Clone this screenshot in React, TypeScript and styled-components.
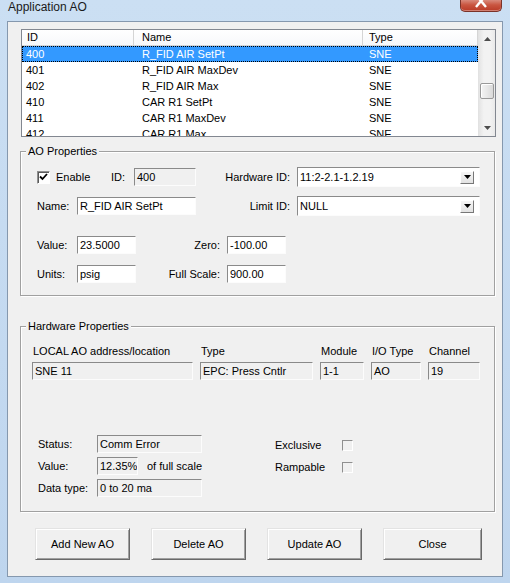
import styled, { createGlobalStyle } from "styled-components";

const GlobalStyle = createGlobalStyle`
  html, body {
    margin: 0;
    padding: 0;
    background: #c4d9f0;
  }
  body {
    font-family: "Liberation Sans", Arial, sans-serif;
    font-size: 11px;
    line-height: 13px;
    color: #000;
  }
  * {
    box-sizing: border-box;
  }
`;

const Window = styled.div`
  width: 510px;
  height: 583px;
  display: flex;
  flex-direction: column;
  background: linear-gradient(180deg, #cbdff3 0%, #bed5ee 100%);
  overflow: hidden;
`;

const TitleBar = styled.div`
  height: 21px;
  flex: none;
  display: flex;
  align-items: flex-start;
  padding-left: 8px;
`;

const Title = styled.span`
  font-size: 12px;
  line-height: 12px;
  margin-top: 1px;
  color: #1a1a1a;
`;

const CloseButton = styled.div`
  margin-left: auto;
  margin-right: 8px;
  width: 42px;
  height: 12px;
  border: 1px solid #7b3329;
  border-top: none;
  border-radius: 0 0 5px 5px;
  background: linear-gradient(180deg, #d98a7c 0%, #c95540 45%, #b93a27 100%);
  box-shadow: inset 0 -1px 0 rgba(255, 255, 255, 0.35);
  display: flex;
  justify-content: center;
  align-items: flex-start;
  overflow: hidden;
`;

const Client = styled.div`
  margin: 0 7px;
  height: 556px;
  flex: none;
  border: 1px solid #8598ae;
  background: #f0f0f0;
  display: flex;
  flex-direction: column;
  align-items: flex-start;
  padding: 7px 0 0 12px;
`;

/* ---------- list view ---------- */

const ListView = styled.div`
  margin-left: 1px;
  width: 475px;
  height: 108px;
  flex: none;
  border: 1px solid #828790;
  background: #fff;
  display: flex;
  overflow: hidden;
`;

const ListBody = styled.div`
  flex: 1;
  display: flex;
  flex-direction: column;
  overflow: hidden;
`;

const Columns = styled.div`
  display: grid;
  grid-template-columns: 112px 229px 1fr;
  height: 16px;
  flex: none;
  align-items: center;
  white-space: nowrap;

  & > *:nth-child(1) {
    padding-left: 4px;
  }
  & > *:nth-child(2) {
    padding-left: 8px;
  }
  & > *:nth-child(3) {
    padding-left: 6px;
  }
`;

const HeaderRow = styled(Columns)`
  background: linear-gradient(180deg, #ffffff 0%, #f7f8fa 100%);
  border-bottom: 1px solid #d5d5d5;
  & > *:nth-child(1) {
    padding-left: 5px;
  }
`;

const HeaderCell = styled.div`
  height: 100%;
  line-height: 15px;
  border-right: 1px solid #d5d5d5;
`;

const ListRow = styled(Columns)<{ $selected?: boolean }>`
  background: ${(p) => (p.$selected ? "#3399ff" : "transparent")};
  color: ${(p) => (p.$selected ? "#fff" : "#000")};
  outline: ${(p) => (p.$selected ? "1px dotted #000" : "none")};
  outline-offset: -1px;
`;

const Cell = styled.div`
  line-height: 16px;
`;

const ScrollBar = styled.div`
  width: 17px;
  flex: none;
  display: flex;
  flex-direction: column;
  border-left: 1px solid #e2e2e2;
  background: linear-gradient(90deg, #e4e4e4 0%, #f2f2f2 30%, #f2f2f2 70%, #e9e9e9 100%);
`;

const ScrollArrow = styled.div`
  height: 17px;
  flex: none;
  display: flex;
  align-items: center;
  justify-content: center;
`;

const ScrollTrack = styled.div`
  flex: 1;
  padding: 36px 1px 0 1px;
`;

const Thumb = styled.div`
  height: 16px;
  border: 1px solid #999;
  border-radius: 2px;
  background: linear-gradient(90deg, #f4f4f4 0%, #e8e8e8 50%, #d9d9d9 100%);
  box-shadow: inset 1px 1px 0 #fff;
`;

/* ---------- group boxes ---------- */

const Group = styled.fieldset<{ $mt: number }>`
  margin: ${(p) => p.$mt}px 0 0 0;
  padding: 0;
  width: 475px;
  flex: none;
  min-inline-size: 0;
  border: 1px solid #a0a0a0;
  box-shadow: inset 1px 1px 0 #fff, 1px 1px 0 #fff;
`;

const Legend = styled.legend`
  margin-left: 5px;
  padding: 0 2px;
  line-height: 13px;
  background: #f0f0f0;
`;

const GroupBody = styled.div<{ $pad: string }>`
  padding: ${(p) => p.$pad};
  display: flex;
  flex-direction: column;
`;

const Row = styled.div<{ $mt?: number }>`
  display: flex;
  align-items: center;
  height: 20px;
  margin-top: ${(p) => p.$mt ?? 0}px;
`;

const Label = styled.span<{ $w?: number; $right?: boolean }>`
  flex: none;
  width: ${(p) => (p.$w ? `${p.$w}px` : "auto")};
  text-align: ${(p) => (p.$right ? "right" : "left")};
  padding-right: ${(p) => (p.$right ? 7 : 0)}px;
  white-space: nowrap;
`;

const Field = styled.div<{ $w?: number; $h?: number; $ro?: boolean }>`
  flex: none;
  width: ${(p) => (p.$w ? `${p.$w}px` : "100%")};
  height: ${(p) => p.$h ?? 18}px;
  line-height: ${(p) => (p.$h ?? 18) - 2}px;
  padding-left: 2px;
  border: 1px solid;
  border-color: #8a8a8a #fcfcfc #fcfcfc #8a8a8a;
  background: ${(p) => (p.$ro ? "#f0f0f0" : "#fff")};
  white-space: nowrap;
  overflow: hidden;
`;

const Combo = styled.div`
  flex: none;
  width: 183px;
  height: 20px;
  display: flex;
  align-items: center;
  padding-left: 2px;
  border: 1px solid;
  border-color: #8a8a8a #fcfcfc #fcfcfc #8a8a8a;
  background: #fff;
`;

const ComboText = styled.span`
  flex: 1;
  white-space: nowrap;
`;

const ComboButton = styled.div`
  width: 14px;
  height: 13px;
  margin-right: 5px;
  border: 1px solid;
  border-color: #fff #777 #777 #fff;
  background: linear-gradient(180deg, #f6f6f6 0%, #e2e2e2 100%);
  display: flex;
  align-items: center;
  justify-content: center;
`;

const CheckLabel = styled.label`
  flex: none;
  width: 74px;
  display: flex;
  align-items: center;
  gap: 6px;
`;

const CheckBox = styled.span<{ $size: number; $flat?: boolean }>`
  flex: none;
  width: ${(p) => p.$size}px;
  height: ${(p) => p.$size}px;
  border: 1px solid;
  border-color: #8f8f8f #fff #fff #8f8f8f;
  background: ${(p) => (p.$flat ? "#f0f0f0" : "#fff")};
  box-shadow: ${(p) => (p.$flat ? "none" : "inset 1px 1px 0 #5a5a5a")};
  display: flex;
  align-items: center;
  justify-content: center;
`;

/* ---------- hardware properties ---------- */

const HwGrid = styled.div`
  display: grid;
  grid-template-columns: 161px 113px 44px 50px 52px;
  column-gap: 7px;
  row-gap: 4px;
`;

const ColHead = styled.div`
  padding-left: 1px;
  white-space: nowrap;
`;

const StatusArea = styled.div`
  display: flex;
  align-items: flex-start;
  margin-top: 55px;
  padding-left: 6px;
`;

const StatusGrid = styled.div`
  width: 159px;
  display: grid;
  grid-template-columns: 59px 1fr;
  grid-auto-rows: 18px;
  row-gap: 4px;
  align-items: center;
`;

const Inline = styled.div`
  display: flex;
  align-items: center;
  gap: 9px;
  white-space: nowrap;
`;

const Flags = styled.div`
  margin-left: 78px;
  padding-top: 4px;
  display: flex;
  flex-direction: column;
  gap: 10px;
`;

const FlagRow = styled.div`
  display: flex;
  align-items: center;
  height: 12px;
`;

/* ---------- buttons ---------- */

const ButtonRow = styled.div`
  display: flex;
  gap: 21px;
  margin-top: 16px;
  padding-left: 15px;
`;

const Button = styled.button<{ $w?: number }>`
  width: ${(p) => p.$w ?? 95}px;
  height: 32px;
  padding: 0;
  font: inherit;
  color: #000;
  background: #f0f0f0;
  border: 1px solid;
  border-color: #e3e3e3 #696969 #696969 #e3e3e3;
  box-shadow: inset 1px 1px 0 #fff, inset -1px -1px 0 #a0a0a0;
`;

const rows = [
  { id: "400", name: "R_FID AIR SetPt", type: "SNE" },
  { id: "401", name: "R_FID AIR MaxDev", type: "SNE" },
  { id: "402", name: "R_FID AIR Max", type: "SNE" },
  { id: "410", name: "CAR R1 SetPt", type: "SNE" },
  { id: "411", name: "CAR R1 MaxDev", type: "SNE" },
  { id: "412", name: "CAR R1 Max", type: "SNE" },
];

const DownTri = () => (
  <svg width="7" height="4" viewBox="0 0 7 4">
    <polygon points="0,0 7,0 3.5,4" fill="#000" />
  </svg>
);

const ScrollTri = ({ up }: { up?: boolean }) => (
  <svg width="7" height="4" viewBox="0 0 7 4">
    <polygon points={up ? "0,4 7,4 3.5,0" : "0,0 7,0 3.5,4"} fill="#4d4d4d" />
  </svg>
);

const App = () => {
  return (
    <>
      <GlobalStyle />
      <Window>
        <TitleBar>
          <Title>Application AO</Title>
          <CloseButton>
            <svg width="14" height="8" viewBox="0 0 14 8">
              <path d="M2 -5 L12 7 M12 -5 L2 7" stroke="#fff" strokeWidth="2.4" />
            </svg>
          </CloseButton>
        </TitleBar>
        <Client>
          <ListView>
            <ListBody>
              <HeaderRow>
                <HeaderCell>ID</HeaderCell>
                <HeaderCell>Name</HeaderCell>
                <HeaderCell>Type</HeaderCell>
              </HeaderRow>
              {rows.map((r, i) => (
                <ListRow key={r.id} $selected={i === 0}>
                  <Cell>{r.id}</Cell>
                  <Cell>{r.name}</Cell>
                  <Cell>{r.type}</Cell>
                </ListRow>
              ))}
            </ListBody>
            <ScrollBar>
              <ScrollArrow>
                <ScrollTri up />
              </ScrollArrow>
              <ScrollTrack>
                <Thumb />
              </ScrollTrack>
              <ScrollArrow>
                <ScrollTri />
              </ScrollArrow>
            </ScrollBar>
          </ListView>

          <Group $mt={8}>
            <Legend>AO Properties</Legend>
            <GroupBody $pad="9px 0 11px 16px">
              <Row>
                <CheckLabel>
                  <CheckBox $size={13}>
                    <svg width="9" height="8" viewBox="0 0 9 8">
                      <path d="M1 3.5 L3.5 6 L8 1" stroke="#000" strokeWidth="1.8" fill="none" />
                    </svg>
                  </CheckBox>
                  Enable
                </CheckLabel>
                <Label $w={23}>ID:</Label>
                <Field $w={62} $ro>
                  400
                </Field>
                <Label $w={101} $right>
                  Hardware ID:
                </Label>
                <Combo>
                  <ComboText>11:2-2.1-1.2.19</ComboText>
                  <ComboButton>
                    <DownTri />
                  </ComboButton>
                </Combo>
              </Row>
              <Row $mt={9}>
                <Label $w={40}>Name:</Label>
                <Field $w={119}>R_FID AIR SetPt</Field>
                <Label $w={101} $right>
                  Limit ID:
                </Label>
                <Combo>
                  <ComboText>NULL</ComboText>
                  <ComboButton>
                    <DownTri />
                  </ComboButton>
                </Combo>
              </Row>
              <Row $mt={19}>
                <Label $w={40}>Value:</Label>
                <Field $w={59}>23.5000</Field>
                <Label $w={91} $right>
                  Zero:
                </Label>
                <Field $w={59}>-100.00</Field>
              </Row>
              <Row $mt={9}>
                <Label $w={40}>Units:</Label>
                <Field $w={59}>psig</Field>
                <Label $w={91} $right>
                  Full Scale:
                </Label>
                <Field $w={59}>900.00</Field>
              </Row>
            </GroupBody>
          </Group>

          <Group $mt={24}>
            <Legend>Hardware Properties</Legend>
            <GroupBody $pad="12px 0 14px 11px">
              <HwGrid>
                <ColHead>LOCAL AO address/location</ColHead>
                <ColHead>Type</ColHead>
                <ColHead>Module</ColHead>
                <ColHead>I/O Type</ColHead>
                <ColHead>Channel</ColHead>
                <Field $ro>SNE 11</Field>
                <Field $ro>EPC: Press Cntlr</Field>
                <Field $ro>1-1</Field>
                <Field $ro>AO</Field>
                <Field $ro>19</Field>
              </HwGrid>
              <StatusArea>
                <StatusGrid>
                  <span>Status:</span>
                  <Field $ro>Comm Error</Field>
                  <span>Value:</span>
                  <Inline>
                    <Field $w={41} $ro>
                      12.35%
                    </Field>
                    of full scale
                  </Inline>
                  <span>Data type:</span>
                  <Field $ro>0 to 20 ma</Field>
                </StatusGrid>
                <Flags>
                  <FlagRow>
                    <Label $w={67}>Exclusive</Label>
                    <CheckBox $size={11} $flat />
                  </FlagRow>
                  <FlagRow>
                    <Label $w={67}>Rampable</Label>
                    <CheckBox $size={11} $flat />
                  </FlagRow>
                </Flags>
              </StatusArea>
            </GroupBody>
          </Group>

          <ButtonRow>
            <Button>Add New AO</Button>
            <Button>Delete AO</Button>
            <Button>Update AO</Button>
            <Button $w={99}>Close</Button>
          </ButtonRow>
        </Client>
      </Window>
    </>
  );
};

export default App;
